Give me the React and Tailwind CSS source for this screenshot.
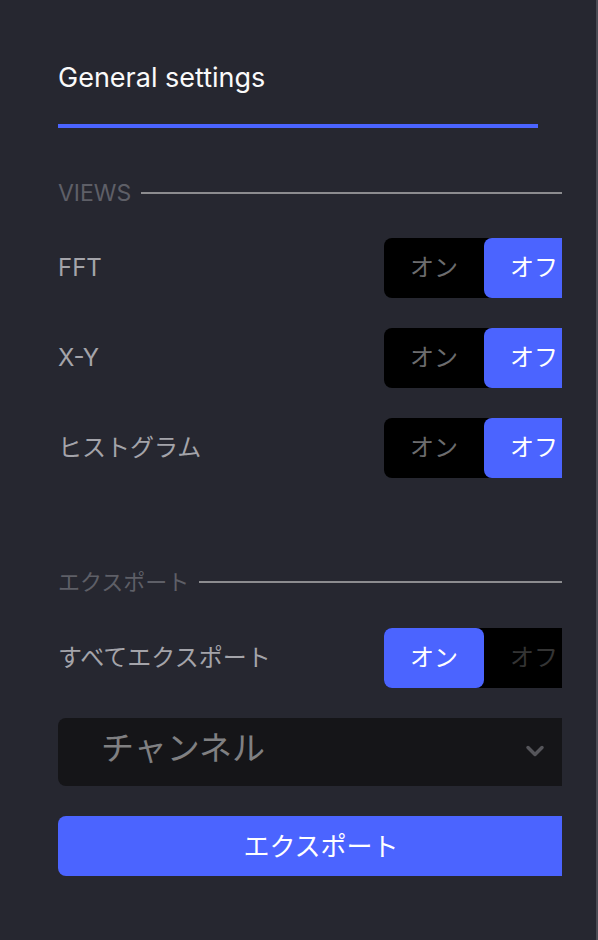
import React, { useState } from "react";
import { ChevronDown } from "lucide-react";

const font = { fontFamily: '"Inter", "Noto Sans CJK JP", sans-serif' };

const SectionLabel = ({ children, size = "text-[22px]" }) => (
    <div className="flex items-center gap-[10px] h-[28px]">
        <span className={size + " leading-none text-[#5e5f67] whitespace-nowrap"}>{children}</span>
        <div className="flex-1 h-[2px] bg-[#8c8c8f]" />
    </div>
);

const Toggle = ({ on, dimOff }) => (
    <div className="flex w-[200px] h-[60px] bg-black rounded-lg text-[24px] shrink-0">
        <button
            className={
                "w-[100px] h-full rounded-lg flex items-center justify-center " +
                (on ? "bg-[#4b64ff] text-white" : "text-[#6c6c6e]")
            }
        >
            オン
        </button>
        <button
            className={
                "w-[100px] h-full rounded-lg flex items-center justify-center " +
                (!on ? "bg-[#4b64ff] text-white" : dimOff ? "text-[#343434]" : "text-[#6c6c6e]")
            }
        >
            オフ
        </button>
    </div>
);

const ToggleRow = ({ label, on, dimOff }) => (
    <div className="flex items-center justify-between h-[60px]">
        <span className="text-[24px] text-[#a4a4aa]">{label}</span>
        <Toggle on={on} dimOff={dimOff} />
    </div>
);

export default function App() {
    const [views] = useState([
        { label: "FFT", on: false },
        { label: "X-Y", on: false },
        { label: "ヒストグラム", on: false },
    ]);

    return (
        <div className="w-[598px] h-[940px] bg-[#262730] border-r-2 border-[#4a4b54] overflow-hidden" style={font}>
            <div className="ml-[58px] w-[504px] overflow-hidden pt-[62px]">
                <div className="w-[526px]">
                    <div className="w-[480px]">
                        <div className="text-[27px] leading-[32px] text-[#fafafa]">General settings</div>
                        <div className="mt-[30px] h-[4px] bg-[#4b64ff]" />
                    </div>

                    <div className="mt-[51px]">
                        <SectionLabel size="text-[23px]">VIEWS</SectionLabel>
                    </div>

                    <div className="mt-[31px] flex flex-col gap-[30px]">
                        {views.map((v) => (
                            <ToggleRow key={v.label} label={v.label} on={v.on} />
                        ))}
                    </div>

                    <div className="mt-[90px]">
                        <SectionLabel>エクスポート</SectionLabel>
                    </div>

                    <div className="mt-[32px]">
                        <ToggleRow label="すべてエクスポート" on={true} dimOff />
                    </div>

                    <div className="mt-[30px] h-[68px] bg-[#151518] rounded-lg flex items-center pl-[43px] pr-[35px] pb-[6px]">
                        <span className="flex-1 text-[33px] text-[#808082]">チャンネル</span>
                        <ChevronDown size={28} strokeWidth={3} className="text-[#55555a] mt-[4px]" />
                    </div>

                    <button className="mt-[30px] w-full h-[60px] bg-[#4b64ff] rounded-lg text-white text-[26px]">
                        エクスポート
                    </button>
                </div>
            </div>
        </div>
    );
}
